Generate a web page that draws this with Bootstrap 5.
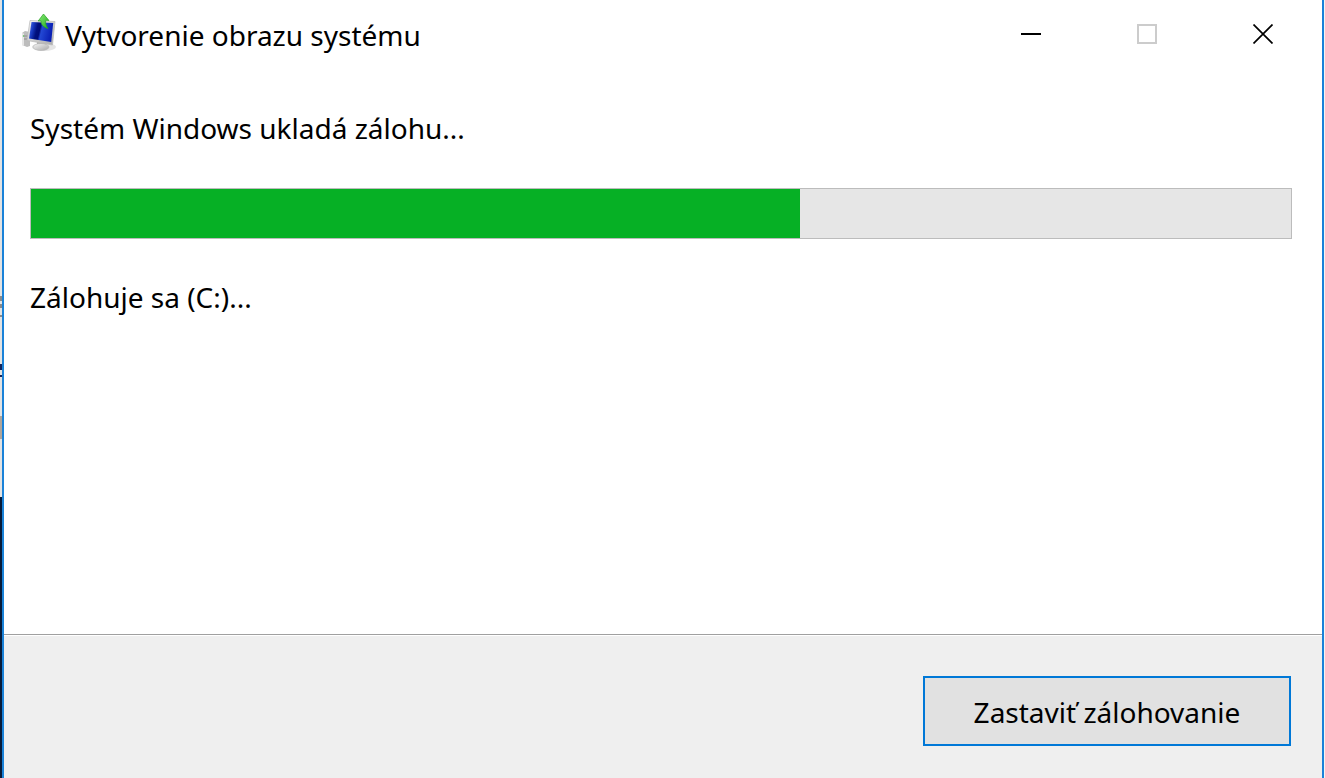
<!DOCTYPE html>
<html lang="sk">
<head>
<meta charset="utf-8">
<meta name="viewport" content="width=device-width, initial-scale=1">
<title>Vytvorenie obrazu systému</title>
<link href="https://cdn.jsdelivr.net/npm/bootstrap@5.3.0/dist/css/bootstrap.min.css" rel="stylesheet">
<style>
  body {
    font-family: "Noto Sans", "Open Sans", sans-serif;
    font-size: 28px;
    line-height: 40px;
    color: #000;
    /* sliver of the desktop behind the window's left edge */
    background:
      linear-gradient(transparent 296px, #8a8a8a 296px 301px, transparent 301px 304px, #8a8a8a 304px 308px, transparent 308px 315px, #8a8a8a 315px 317px, transparent 317px 364px, #14245a 364px 370px, transparent 370px 375px, #14245a 375px 377px, transparent 377px 416px, #b0a59a 416px 439px, transparent 439px) left / 2px 100% no-repeat,
      linear-gradient(#e3e3e3 497px, #061a38 497px) left / 2px 100% no-repeat,
      #f4f4f4;
    padding: 0 1px 0 2px;
  }
  .app-window { border: solid #1a82d8; border-width: 0 2px; background: #fff; }
  .title-bar { height: 70px; padding-left: 16px; padding-right: 1px; }
  .title-group { padding-top: 13px; }
  .app-icon { width: 38px; height: 40px; }
  .title-text { font-size: 28px; line-height: 40px; padding-left: 7px; padding-top: 2px; }
  .win-btn { width: 116px; height: 68px; border: 0; background: transparent; padding: 0; color: #000; }
  .win-btn:disabled { color: #ccc; }
  .content-area { padding: 38px 30px 0 26px; }
  .backup-progress {
    height: 51px;
    margin: 40px 0 38px;
    border: 1px solid #bcbcbc;
    border-radius: 0;
    background: #e6e6e6;
  }
  .backup-progress .progress-bar { background: #06b025; }
  .action-bar {
    border-top: 1px solid #a0a0a0;
    box-shadow: inset 0 1px #fff;
    background: #efefef;
    padding: 41px 31px 32px;
  }
  .stop-btn {
    width: 368px;
    height: 70px;
    border: 2px solid #0078d7;
    border-radius: 0;
    background: #e1e1e1;
    color: #000;
    font-size: 28px;
    line-height: 40px;
    padding: 2px 0 0;
  }
</style>
</head>
<body class="min-vh-100 d-flex">
<main class="app-window flex-grow-1 d-flex flex-column">
  <header class="title-bar d-flex align-items-start">
    <div class="title-group d-flex align-items-start">
      <svg class="app-icon" viewBox="20 13 38 40" aria-hidden="true">
        <defs>
          <linearGradient id="screen" x1="0" y1="0" x2="1" y2=".2">
            <stop offset="0" stop-color="#5b7be6"/><stop offset=".2" stop-color="#1a3cc4"/>
            <stop offset=".38" stop-color="#00107e"/><stop offset=".5" stop-color="#000c78"/>
            <stop offset=".58" stop-color="#2348d4"/><stop offset="1" stop-color="#0a20b4"/>
          </linearGradient>
          <linearGradient id="metal" x1="0" y1="0" x2="1" y2="1">
            <stop offset="0" stop-color="#f6f6f6"/><stop offset="1" stop-color="#a8a8a8"/>
          </linearGradient>
          <linearGradient id="leaf" x1="0" y1="0" x2="1" y2="1">
            <stop offset="0" stop-color="#8df07a"/><stop offset="1" stop-color="#1fa81c"/>
          </linearGradient>
        </defs>
        <ellipse cx="44" cy="47" rx="12" ry="4" fill="#d4d4d4" opacity=".6"/>
        <path d="M22 33L25 31L30 32V46L27 47L22 45Z" fill="#bdbdbd"/>
        <path d="M22 33L24 33.500V46L22 45Z" fill="#e6e6e6"/>
        <path d="M24 36L29 36M24 39L29 39" stroke="#8e8e8e"/>
        <circle cx="23.500" cy="36" r=".7" fill="#3fb53b"/>
        <path d="M37 42L46 43L47 47H37Z" fill="#a9a9a9"/>
        <ellipse cx="41" cy="47" rx="8" ry="3.500" fill="url(#metal)" stroke="#b4b4b4" stroke-width=".6"/>
        <path d="M30 20.500L55 21.500L52.500 45L27 40.500Z" fill="url(#metal)" stroke="#b9b9b9" stroke-width=".7"/>
        <path d="M31.500 22L53.200 23L51.200 42L29 38.500Z" fill="url(#screen)"/>
        <path d="M43.500 14L49 20.500L45.800 20.300C45.200 23 45.800 25.500 48 28.500C43.500 27.500 40.800 24.500 41 20.800L38.200 21Z" fill="url(#leaf)" stroke="#27a023" stroke-width=".7" stroke-linejoin="round"/>
      </svg>
      <h1 class="title-text fw-normal m-0">Vytvorenie obrazu systému</h1>
    </div>
    <div class="d-flex ms-auto">
      <button class="win-btn" type="button" aria-label="Minimalizovať"><svg class="d-block mx-auto" width="20" height="20" viewBox="0 0 20 20"><path d="M0 10H20" stroke="currentColor" stroke-width="2"/></svg></button>
      <button class="win-btn" type="button" aria-label="Maximalizovať" disabled><svg class="d-block mx-auto" width="20" height="20" viewBox="0 0 20 20"><path d="M1 1H19V19H1Z" fill="none" stroke="currentColor" stroke-width="2"/></svg></button>
      <button class="win-btn" type="button" aria-label="Zavrieť"><svg class="d-block mx-auto" width="20" height="20" viewBox="0 0 20 20"><path d="M.5.5L19.500 19.500M19.500.5L.5 19.500" stroke="currentColor" stroke-width="1.700"/></svg></button>
    </div>
  </header>
  <section class="content-area flex-grow-1">
    <p class="m-0" id="backup-label">Systém Windows ukladá zálohu...</p>
    <div class="progress backup-progress" role="progressbar" aria-labelledby="backup-label" aria-valuenow="61" aria-valuemin="0" aria-valuemax="100">
      <div class="progress-bar" style="width: 61%"></div>
    </div>
    <p class="m-0">Zálohuje sa (C:)...</p>
  </section>
  <footer class="action-bar d-flex justify-content-end">
    <button class="btn stop-btn" type="button">Zastaviť zálohovanie</button>
  </footer>
</main>
<script src="https://cdn.jsdelivr.net/npm/bootstrap@5.3.0/dist/js/bootstrap.bundle.min.js"></script>
</body>
</html>
